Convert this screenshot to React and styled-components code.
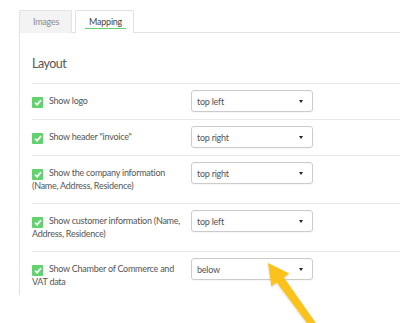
import React from "react";
import styled, { createGlobalStyle } from "styled-components";

const Global = createGlobalStyle`
  html, body { margin: 0; padding: 0; background: #fff; overflow: hidden; }
  body { font-family: Lato, "Open Sans", sans-serif; width: 400px; height: 323px; position: relative; }
`;

const Page = styled.div`
  padding: 10px 0 0 19px;
`;

const Tabs = styled.div`
  display: flex;
  gap: 3px;
  align-items: flex-end;
`;

const Tab = styled.div`
  box-sizing: border-box;
  height: 23px;
  padding: ${(p) => (p.$active ? "0 7px 0 9px" : "0 8px 0 9px")};
  border: 1px solid #e2e2e2;
  border-bottom: none;
  border-radius: 2px 2px 0 0;
  background: ${(p) => (p.$active ? "#fff" : "#f3f3f3")};
  color: ${(p) => (p.$active ? "#444" : "#8a8a8a")};
  font-size: 9px;
  letter-spacing: -0.25px;
  display: flex;
  align-items: center;
  margin-bottom: -1px;
  z-index: 1;
`;

const TabLabel = styled.span`
  position: relative;
  padding: 0 4px;
  line-height: 12px;
  &::after {
    content: "";
    display: ${(p) => (p.$active ? "block" : "none")};
    position: absolute;
    left: 0;
    right: 0;
    bottom: -1px;
    height: 1.5px;
    background: #62d26f;
  }
`;

const Panel = styled.div`
  width: 420px;
  border: 1px solid #e2e2e2;
  border-bottom: none;
  padding: 22px 0 0 12px;
  box-sizing: border-box;
  height: 263px;
`;

const Heading = styled.h2`
  margin: 0;
  font-weight: 400;
  font-size: 12.5px;
  letter-spacing: -0.5px;
  line-height: 18px;
  color: #555;
  padding-bottom: 10px;
  border-bottom: 1px solid #e8e8e8;
`;

const Row = styled.div`
  display: flex;
  align-items: flex-start;
  padding: 6px 0;
  border-bottom: ${(p) => (p.$last ? "none" : "1px solid #e8e8e8")};
`;

const Label = styled.div`
  width: 149px;
  margin-right: 10px;
  padding: 5px 0;
  font-size: 9px;
  letter-spacing: -0.25px;
  line-height: 12px;
  color: #555;
`;

const Check = styled.span`
  display: inline-flex;
  align-items: center;
  justify-content: center;
  width: 11px;
  height: 11px;
  border-radius: 1px;
  background: #62d26f;
  vertical-align: -2px;
  margin-right: 6px;
`;

const Select = styled.div`
  box-sizing: border-box;
  width: 122px;
  height: 22px;
  border: 1px solid #ccc;
  border-radius: 3px;
  background: #fff;
  display: flex;
  align-items: center;
  justify-content: space-between;
  padding: 0 9px 0 5px;
  font-size: 9px;
  letter-spacing: -0.25px;
  color: #555;
  box-shadow: 0 1px 1px rgba(0,0,0,0.04);
`;

const Caret = styled.span`
  width: 0;
  height: 0;
  border-left: 2.5px solid transparent;
  border-right: 2.5px solid transparent;
  border-top: 3px solid #222;
`;

const Overlay = styled.svg`
  position: absolute;
  left: 0;
  top: 0;
  width: 400px;
  height: 323px;
  pointer-events: none;
`;

const rows = [
  { label: "Show logo", value: "top left" },
  { label: 'Show header "invoice"', value: "top right" },
  { label: "Show the company information (Name, Address, Residence)", value: "top right" },
  { label: "Show customer information (Name, Address, Residence)", value: "top left" },
  { label: "Show Chamber of Commerce and VAT data", value: "below" },
];

function CheckIcon() {
  return (
    <svg width="8" height="7" viewBox="0 0 8 7">
      <path d="M1 3.6 L3.1 5.6 L7 1.2" stroke="#fff" strokeWidth="1.8" fill="none" />
    </svg>
  );
}

export default function App() {
  return (
    <>
      <Global />
      <Page>
        <Tabs>
          <Tab><TabLabel>Images</TabLabel></Tab>
          <Tab $active><TabLabel $active>Mapping</TabLabel></Tab>
        </Tabs>
        <Panel>
          <Heading>Layout</Heading>
          {rows.map((r, i) => (
            <Row key={i} $last={i === rows.length - 1}>
              <Label>
                <Check><CheckIcon /></Check>
                {r.label}
              </Label>
              <Select>
                <span>{r.value}</span>
                <Caret />
              </Select>
            </Row>
          ))}
        </Panel>
      </Page>
      <Overlay viewBox="0 0 400 323">
        <defs>
          <filter id="sh" x="-20%" y="-20%" width="140%" height="140%">
            <feDropShadow dx="0" dy="1" stdDeviation="0.8" floodColor="#000" floodOpacity="0.18" />
          </filter>
        </defs>
        <polygon
          points="268,263 289.2,273.5 283.9,277.4 318.3,326.5 312.7,330.7 276.7,282.6 271.4,286.5"
          fill="#fcc21b"
          filter="url(#sh)"
        />
      </Overlay>
    </>
  );
}
